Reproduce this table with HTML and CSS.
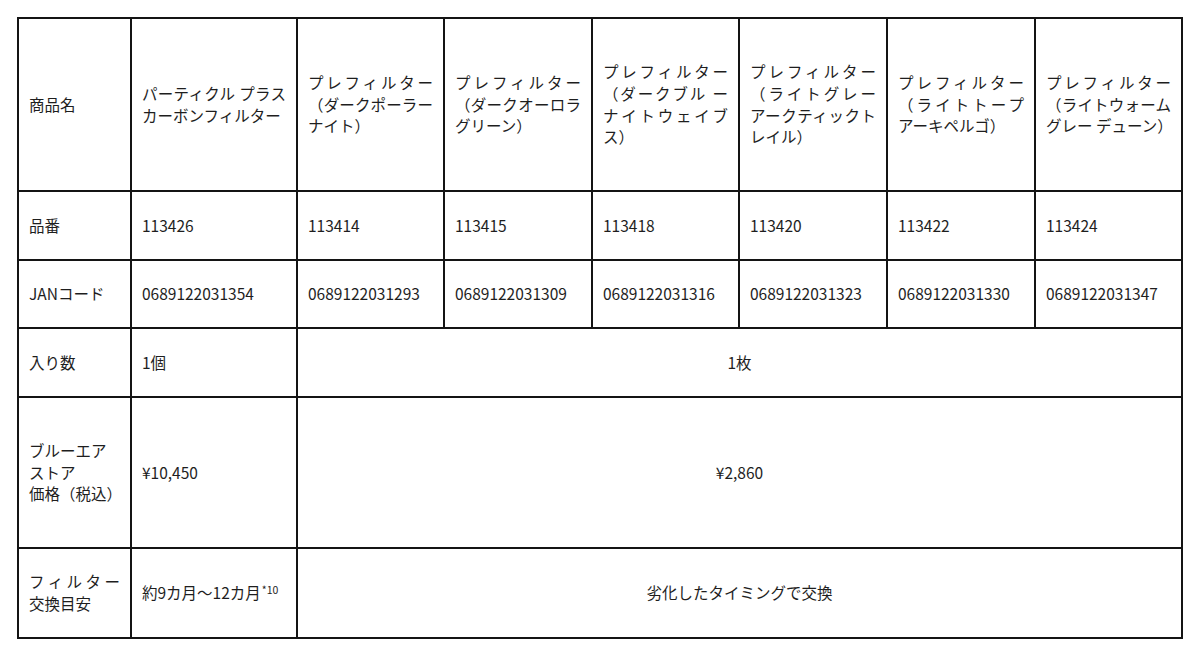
FILE: index.html
```html
<!DOCTYPE html>
<html lang="ja">
<head>
<meta charset="utf-8">
<title>フィルター仕様</title>
<link rel="stylesheet" href="styles.css">
</head>
<body>
<div class="wrap">
<table class="spec">
  <colgroup>
    <col class="c-head">
    <col class="c-main">
    <col class="c-a">
    <col class="c-b">
    <col class="c-a">
    <col class="c-b">
    <col class="c-b">
    <col class="c-a">
  </colgroup>
  <tbody>
    <tr class="r-name">
      <th>商品名</th>
      <td>パーティクル プラス カーボンフィルター</td>
      <td>プレフィルター（ダークポーラーナイト）</td>
      <td>プレフィルター（ダークオーロラグリーン）</td>
      <td>プレフィルター（ダークブル ーナイトウェイブス）</td>
      <td>プレフィルター（ライトグレー アークティックトレイル）</td>
      <td>プレフィルター（ライトトープ アーキペルゴ）</td>
      <td>プレフィルター（ライトウォームグレー デューン）</td>
    </tr>
    <tr class="r-code">
      <th>品番</th>
      <td>113426</td>
      <td>113414</td>
      <td>113415</td>
      <td>113418</td>
      <td>113420</td>
      <td>113422</td>
      <td>113424</td>
    </tr>
    <tr class="r-jan">
      <th>JANコード</th>
      <td>0689122031354</td>
      <td>0689122031293</td>
      <td>0689122031309</td>
      <td>0689122031316</td>
      <td>0689122031323</td>
      <td>0689122031330</td>
      <td>0689122031347</td>
    </tr>
    <tr class="r-qty">
      <th>入り数</th>
      <td>1個</td>
      <td class="span" colspan="6">1枚</td>
    </tr>
    <tr class="r-price">
      <th>ブルーエア<br>ストア<br><span class="nowrap">価格（税込）</span></th>
      <td>¥10,450</td>
      <td class="span" colspan="6">¥2,860</td>
    </tr>
    <tr class="r-life">
      <th>フィルター 交換目安</th>
      <td>約9カ月〜12カ月<sup>*10</sup></td>
      <td class="span" colspan="6">劣化したタイミングで交換</td>
    </tr>
  </tbody>
</table>
</div>
</body>
</html>
```

FILE: styles.css
```css
html, body {
  margin: 0;
  padding: 0;
  background: #ffffff;
}

.wrap {
  padding: 17px 0 0 17px;
}

.spec {
  border-collapse: separate;
  border-spacing: 0;
  table-layout: fixed;
  width: 1166px;
  border-top: 2px solid #141414;
  border-left: 2px solid #141414;
  font-family: "Noto Sans CJK JP", "Noto Sans", sans-serif;
  font-size: 15.5px;
  line-height: 1.4;
  color: #1e1e1e;
}

.c-head { width: 113px; }
.c-main { width: 166px; }
.c-a { width: 147px; }
.c-b { width: 148px; }

.spec th,
.spec td {
  border-right: 2px solid #141414;
  border-bottom: 2px solid #141414;
  padding: 0 10px;
  text-align: justify;
  vertical-align: middle;
  font-weight: 400;
  word-break: normal;
}

.spec td.span {
  text-align: center;
}

.nowrap {
  white-space: nowrap;
}

.r-name { height: 173px; }
.r-code { height: 69px; }
.r-jan { height: 68px; }
.r-qty { height: 69px; }
.r-price { height: 151px; }
.r-life { height: 90px; }

.spec sup {
  font-size: 10.5px;
  line-height: 0;
  vertical-align: 5px;
  margin-left: 1px;
}
```
